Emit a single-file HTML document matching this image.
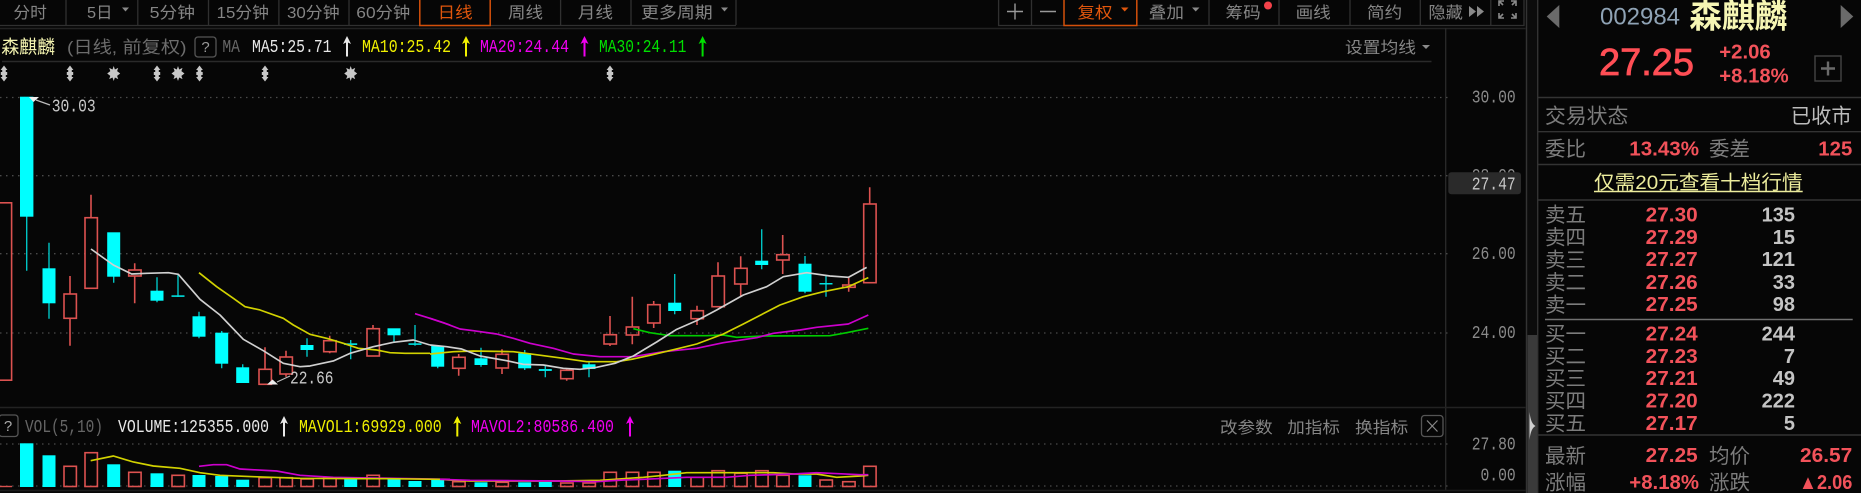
<!DOCTYPE html>
<html><head><meta charset="utf-8"><style>
html,body{margin:0;padding:0;background:#060606;width:1861px;height:493px;overflow:hidden}
svg{display:block;filter:blur(.35px)}
text{font-family:"Liberation Sans","Noto Sans CJK SC",sans-serif}
.m{font-family:"Liberation Mono","Noto Sans CJK SC",monospace;font-size:18.5px}
.t{font-size:16px;fill:#858585}
.l{font-size:20.5px;fill:#7c7c7c}
.p{font-size:20px;font-weight:bold;fill:#f2525a}
.q{font-size:20px;font-weight:bold;fill:#c4c4c4;text-anchor:end}
.a{fill:#8a8a8a}
.d{stroke:#4a4a4a;stroke-width:1.3;stroke-dasharray:1.5 4.5;fill:none}
.s{stroke:#303030;stroke-width:1.3;fill:none}
.o{font-size:16px;fill:#e0560c}
</style></head><body>
<svg width="1861" height="493" viewBox="0 0 1861 493" xmlns="http://www.w3.org/2000/svg">
<defs>
<path id="ar" d="M0-10.5L-4-2.5-1-4V10H1V-4L4-2.5Z"/>
<path id="ud" d="M0-8L3.4-3.5H1.8V-1.5H3.2V1.5H1.8V3.5H3.4L0 8-3.4 3.5H-1.8V1.5H-3.2V-1.5H-1.8V-3.5H-3.4Z"/>
<path id="st" d="M0-7.5L1.2-4 4.5-5.6 3.4-2.4 6.5 0 3.4 2.4 4.5 5.6 1.2 4 0 7.5-1.2 4-4.5 5.6-3.4 2.4-6.5 0-3.4-2.4-4.5-5.6-1.2-4Z"/>
</defs>
<rect width="1861" height="493" fill="#060606"/>

<!-- left toolbar -->
<path class="s" d="M0 25.5H736M66 0V25M137.8 0V25M208.5 0V25M278.9 0V25M349 0V25M560.6 0V25M631 0V25M736 0V25"/>
<rect x="419.8" y="-3" width="70.4" height="28.5" fill="none" stroke="#d4500a" stroke-width="1.5"/>
<text class="t" x="13.4" y="18" textLength="33.5" lengthAdjust="spacingAndGlyphs">分时</text>
<text class="t" x="87" y="18" textLength="25.4" lengthAdjust="spacingAndGlyphs">5日</text>
<polygon class="a" points="122,7.5 129,7.5 125.5,11.5"/>
<text class="t" x="149.7" y="18" textLength="45.3" lengthAdjust="spacingAndGlyphs">5分钟</text>
<text class="t" x="216.7" y="18" textLength="52.3" lengthAdjust="spacingAndGlyphs">15分钟</text>
<text class="t" x="287" y="18" textLength="52.6" lengthAdjust="spacingAndGlyphs">30分钟</text>
<text class="t" x="356.3" y="18" textLength="54" lengthAdjust="spacingAndGlyphs">60分钟</text>
<text class="o" x="437.6" y="18" textLength="35" lengthAdjust="spacingAndGlyphs">日线</text>
<text class="t" x="508" y="18" textLength="35" lengthAdjust="spacingAndGlyphs">周线</text>
<text class="t" x="577.8" y="18" textLength="35.2" lengthAdjust="spacingAndGlyphs">月线</text>
<text class="t" x="641" y="18" textLength="71.7" lengthAdjust="spacingAndGlyphs">更多周期</text>
<polygon class="a" points="721,7.5 728,7.5 724.5,11.5"/>

<!-- right toolbar -->
<path class="s" d="M998.6 0V25.5H1524V0M1031.5 0V25M1209 0V25M1279 0V25M1350 0V25M1420.3 0V25M1490.8 0V25"/>
<rect x="1064" y="-3" width="72.8" height="28.5" fill="none" stroke="#d4500a" stroke-width="1.5"/>
<path d="M1007 11.5H1023M1015 3.5V19.5M1040 11.5H1056" stroke="#999" stroke-width="1.4" fill="none"/>
<text class="o" x="1077.5" y="18" textLength="35" lengthAdjust="spacingAndGlyphs">复权</text>
<polygon fill="#e0560c" points="1121,7.5 1128.5,7.5 1124.7,11.5"/>
<text class="t" x="1148.8" y="18" textLength="35.2" lengthAdjust="spacingAndGlyphs">叠加</text>
<polygon class="a" points="1192,7.5 1199.5,7.5 1195.7,11.5"/>
<text class="t" x="1225.5" y="18" textLength="35.2" lengthAdjust="spacingAndGlyphs">筹码</text>
<circle cx="1268" cy="5.5" r="4" fill="#f4424a"/>
<text class="t" x="1295.6" y="18" textLength="35.2" lengthAdjust="spacingAndGlyphs">画线</text>
<text class="t" x="1367" y="18" textLength="35.2" lengthAdjust="spacingAndGlyphs">简约</text>
<text class="t" x="1428.4" y="18" textLength="34.5" lengthAdjust="spacingAndGlyphs">隐藏</text>
<path class="a" d="M1469 6L1476 11.5 1469 17ZM1477 6L1484 11.5 1477 17Z"/>
<path d="M1499 6V1H1504M1499 1L1503 5M1516 6V1H1511M1516 1L1512 5M1499 13V18H1504M1499 18L1503 14M1516 13V18H1511M1516 18L1512 14" stroke="#8a8a8a" stroke-width="1.6" fill="none"/>

<!-- row lines, axis -->
<path d="M0 28.5H1526" stroke="#222" stroke-width="1.5"/>
<path d="M2 61.5H1431.5" stroke="#2a2a2a" stroke-width="1.4"/>
<path d="M1445.7 28V490" stroke="#2a2a2a" stroke-width="1.3"/>
<path d="M0 407.5H1526" stroke="#222" stroke-width="1.5"/>
<path d="M0 490.5H1526" stroke="#1c1c1c" stroke-width="1.5"/>

<!-- title row -->
<text x="1.4" y="53.5" font-size="18.5" fill="#f4f4b0" textLength="53.6" lengthAdjust="spacingAndGlyphs">森麒麟</text>
<text x="67" y="53" font-size="17" fill="#6c6c6c" textLength="119.5" lengthAdjust="spacingAndGlyphs">(日线, 前复权)</text>
<rect x="195" y="37" width="21" height="20" rx="3" fill="none" stroke="#555" stroke-width="1.3"/>
<text x="205.5" y="52" font-size="15" fill="#999" text-anchor="middle">?</text>
<text class="m" x="222.4" y="52" fill="#666" textLength="17.6" lengthAdjust="spacingAndGlyphs">MA</text>
<text class="m" x="252" y="52" fill="#e8e8e8" textLength="79.5" lengthAdjust="spacingAndGlyphs">MA5:25.71</text>
<use href="#ar" x="347" y="46.5" fill="#e8e8e8"/>
<text class="m" x="362" y="52" fill="#f0f000" textLength="89" lengthAdjust="spacingAndGlyphs">MA10:25.42</text>
<use href="#ar" x="466" y="46.5" fill="#f0f000"/>
<text class="m" x="480" y="52" fill="#f000f0" textLength="89" lengthAdjust="spacingAndGlyphs">MA20:24.44</text>
<use href="#ar" x="584.5" y="46.5" fill="#f000f0"/>
<text class="m" x="599" y="52" fill="#00e000" textLength="87.4" lengthAdjust="spacingAndGlyphs">MA30:24.11</text>
<use href="#ar" x="702.6" y="46.5" fill="#00e000"/>
<text class="t" x="1345" y="53" textLength="71" lengthAdjust="spacingAndGlyphs">设置均线</text>
<polygon class="a" points="1422,45 1430,45 1426,49"/>

<!-- event markers -->
<g fill="#c8c8c8">
<use href="#ud" x="4" y="73.5"/><use href="#ud" x="70" y="73.5"/><use href="#st" x="113.7" y="73.5"/><use href="#ud" x="157" y="73.5"/><use href="#st" x="178" y="73.5"/><use href="#ud" x="199.5" y="73.5"/><use href="#ud" x="265" y="73.5"/><use href="#st" x="350.7" y="73.5"/><use href="#ud" x="610" y="73.5"/>
</g>

<!-- grid -->
<path class="d" d="M0 97.5H1450M0 175.7H1450M0 253.7H1450M0 333H1450M0 444H1450M0 486H1450"/>

<!-- axis labels -->
<g fill="#8a8a8a">
<text class="m" x="1471.7" y="102.5" textLength="44" lengthAdjust="spacingAndGlyphs">30.00</text>
<text class="m" x="1471.7" y="181" textLength="44" lengthAdjust="spacingAndGlyphs">28.00</text>
<text class="m" x="1471.7" y="259" textLength="44" lengthAdjust="spacingAndGlyphs">26.00</text>
<text class="m" x="1471.7" y="338" textLength="44" lengthAdjust="spacingAndGlyphs">24.00</text>
<text class="m" x="1471.7" y="449.5" textLength="44" lengthAdjust="spacingAndGlyphs">27.80</text>
<text class="m" x="1480.5" y="480.5" textLength="35.2" lengthAdjust="spacingAndGlyphs">0.00</text>
</g>
<rect x="1448.3" y="172.3" width="72.7" height="22" rx="3" fill="#2a2a2a"/>
<text class="m" x="1471.7" y="189.5" fill="#c8c8c8" textLength="44" lengthAdjust="spacingAndGlyphs">27.47</text>

<!-- cyan candles -->
<g stroke="#00c4c4" stroke-width="1.4" fill="none">
<path d="M26.7 216V270.7M49 242.7V318.7M113.7 276V282.7M157 277.3V302.3M178 275V297M199 311.7V338.3M221.7 331V368.3M242.7 364.3V368M307 338.3V356.7M350.7 340V359.3M394 335V341.7M415 325V345.7M437.7 366V368.3M481 347.7V366.7M524.7 350V370M545.3 365V377.3M589 361.7V377.3M674.7 274V314.3M761.7 229.3V269.3M805 256V293.3M826 275V296.7"/>
</g>
<g fill="#00ffff">
<rect x="20" y="96.7" width="13.4" height="120"/>
<rect x="42.5" y="268.3" width="13" height="35"/>
<rect x="107.2" y="232.3" width="13" height="44.4"/>
<rect x="150.5" y="290.7" width="13" height="10"/>
<rect x="171.5" y="295.3" width="13" height="1.6" fill="#00e0e0"/>
<rect x="192.5" y="316.3" width="13" height="20.4"/>
<rect x="215.2" y="332.7" width="13" height="31"/>
<rect x="236.2" y="367.3" width="13" height="15.7"/>
<rect x="300.5" y="345" width="13" height="5"/>
<rect x="344.2" y="343.3" width="13" height="1.7" fill="#00e0e0"/>
<rect x="387.5" y="328.3" width="13" height="7"/>
<rect x="408.5" y="343.3" width="13" height="1.6" fill="#00e0e0"/>
<rect x="431.2" y="346" width="13" height="20.7"/>
<rect x="474.5" y="358.3" width="13" height="6.7"/>
<rect x="518.2" y="353.3" width="13" height="15"/>
<rect x="538.8" y="369" width="13" height="2" fill="#00e0e0"/>
<rect x="582.5" y="364.3" width="13" height="4.7"/>
<rect x="668.2" y="302.7" width="13" height="8.3"/>
<rect x="755.2" y="260.7" width="13" height="4.3"/>
<rect x="798.5" y="263.7" width="13" height="28"/>
<rect x="819.5" y="283" width="13" height="1.5" fill="#00e0e0"/>
</g>

<!-- red candles -->
<g stroke="#dc5250" stroke-width="1.6" fill="none">
<path d="M70 276V294M70 318.3V345.7M91 194.7V217.7M134.7 263.3V270M134.7 276V303.3M265 347.3V369.3M286 350.7V357M286 374V376.7M329.7 335.7V340.7M329.7 351.7V353.3M373 325V328.7M458.7 354V357.3M458.7 368.3V375.7M502 349.3V354.3M502 368V374M566.7 368.3V370.3M566.7 378.7V380.7M610 316V334.7M610 344V346M632.3 296.7V327M632.3 335V344.3M653.7 301V304.7M653.7 323V328M697 305.7V310.7M697 318.7V325M718 262.3V276M740.7 256.3V268.3M740.7 284V296M782.7 235V254.7M782.7 260V274M848.7 276.7V285M848.7 287.3V291.7M869.7 187.3V204"/>
<rect x="-1" y="202.8" width="12.6" height="177.4"/>
<rect x="64" y="294" width="12.4" height="24.3"/>
<rect x="85" y="217.7" width="12.4" height="70.6"/>
<rect x="128.7" y="270" width="12.4" height="6"/>
<rect x="259" y="369.3" width="12.4" height="15"/>
<rect x="280" y="357" width="12.4" height="17"/>
<rect x="323.7" y="340.7" width="12.4" height="11"/>
<rect x="367" y="328.7" width="12.4" height="27.3"/>
<rect x="452.7" y="357.3" width="12.4" height="11"/>
<rect x="496" y="354.3" width="12.4" height="13.7"/>
<rect x="560.7" y="370.3" width="12.4" height="8.4"/>
<rect x="604" y="334.7" width="12.4" height="9.3"/>
<rect x="626.3" y="327" width="12.4" height="8"/>
<rect x="647.7" y="304.7" width="12.4" height="18.3"/>
<rect x="691" y="310.7" width="12.4" height="8"/>
<rect x="712" y="276" width="12.4" height="30.7"/>
<rect x="734.7" y="268.3" width="12.4" height="15.7"/>
<rect x="776.7" y="254.7" width="12.4" height="5.3"/>
<rect x="842.7" y="285" width="12.4" height="2.3"/>
<rect x="863.7" y="204" width="12.4" height="78.7"/>
</g>

<!-- price MAs (coords in 3x zoom space) -->
<g fill="none" stroke-width="5" stroke-linejoin="round">
<g transform="translate(0,90) scale(.33333)">
<polyline stroke="#d2d200" points="597,548 650,590 700,625 735,650 780,660 850,685 880,705 930,733 980,745 1030,760 1075,775 1130,780 1170,788 1215,790 1290,790"/>
<polyline stroke="#cc00cc" points="1245,671 1290,685 1350,705"/>
<polyline stroke="#d0d0d0" points="273,477 340,525 395,552 440,550 505,548 535,553 600,628 660,675 730,748 790,782 850,820 900,830 930,828 1000,813 1050,790 1120,770 1180,757 1240,750 1290,765"/>
</g>
<g transform="translate(430,170) scale(.33333)">
<polyline stroke="#00cc00" points="610,476 660,488 720,497 830,497 880,495 920,502 1000,498 1200,497 1250,488 1315,475"/>
<polyline stroke="#cc00cc" points="0,445 40,458 90,477 130,482 200,492 250,505 300,520 370,535 430,552 510,560 610,560 700,545 800,535 880,518 980,503 1030,490 1110,480 1160,472 1255,462 1315,435"/>
<polyline stroke="#d2d200" points="0,552 70,545 130,543 250,545 310,553 400,565 470,575 560,575 610,567 660,556 740,537 800,522 880,492 940,462 1050,405 1120,380 1180,365 1255,350 1315,323"/>
<polyline stroke="#d0d0d0" points="0,525 50,530 95,537 150,558 230,572 280,583 340,585 400,595 450,598 500,592 555,580 610,558 680,516 740,478 800,452 860,420 940,375 1010,350 1060,320 1130,308 1200,318 1255,322 1310,292"/>
</g>
</g>

<!-- hi/lo labels -->
<polygon fill="#eee" points="29,97 39,97 33.5,102"/>
<path d="M36 100L50 105" stroke="#bbb" stroke-width="1.2"/>
<text class="m" x="51.7" y="111.7" fill="#c8c8c8" textLength="44" lengthAdjust="spacingAndGlyphs">30.03</text>
<polygon fill="#eee" points="267,384.5 278,384.5 272.5,379.5"/>
<path d="M277 382L290 376" stroke="#bbb" stroke-width="1.2"/>
<text class="m" x="290" y="383.5" fill="#c8c8c8" textLength="43.5" lengthAdjust="spacingAndGlyphs">22.66</text>

<!-- volume header -->
<rect x="-1" y="415" width="19" height="21.5" rx="3" fill="none" stroke="#555" stroke-width="1.3"/>
<text x="8" y="431" font-size="15" fill="#aaa" text-anchor="middle">?</text>
<text class="m" x="25" y="432" fill="#666" textLength="78" lengthAdjust="spacingAndGlyphs">VOL(5,10)</text>
<text class="m" x="118" y="432" fill="#e8e8e8" textLength="151" lengthAdjust="spacingAndGlyphs">VOLUME:125355.000</text>
<use href="#ar" x="284" y="426.5" fill="#e8e8e8"/>
<text class="m" x="299" y="432" fill="#f0f000" textLength="142.7" lengthAdjust="spacingAndGlyphs">MAVOL1:69929.000</text>
<use href="#ar" x="457.3" y="426.5" fill="#f0f000"/>
<text class="m" x="471" y="432" fill="#f000f0" textLength="143" lengthAdjust="spacingAndGlyphs">MAVOL2:80586.400</text>
<use href="#ar" x="630" y="426.5" fill="#f000f0"/>
<text class="t" x="1220" y="433" textLength="52.7" lengthAdjust="spacingAndGlyphs">改参数</text>
<text class="t" x="1287.3" y="433" textLength="52.7" lengthAdjust="spacingAndGlyphs">加指标</text>
<text class="t" x="1355" y="433" textLength="53.3" lengthAdjust="spacingAndGlyphs">换指标</text>
<rect x="1421.5" y="415.5" width="21.5" height="21" rx="3" fill="none" stroke="#555" stroke-width="1.3"/>
<path d="M1427 420.5L1437.5 431.5M1437.5 420.5L1427 431.5" stroke="#888" stroke-width="1.2"/>

<!-- volume bars -->
<path d="M0 486.5H12" stroke="#d8504e" stroke-width="1.4"/>
<g fill="#00ffff">
<rect x="20" y="443.3" width="13.4" height="43.7"/><rect x="42.5" y="455.3" width="13" height="31.7"/><rect x="107.2" y="464.3" width="13" height="22.7"/><rect x="150.5" y="473.3" width="13" height="13.7"/><rect x="192.5" y="475" width="13" height="12"/><rect x="215.2" y="476" width="13" height="11"/><rect x="236.2" y="479.7" width="13" height="7.3"/><rect x="344.2" y="478.7" width="13" height="8.3"/><rect x="387.5" y="479" width="13" height="8"/><rect x="408.5" y="481" width="13" height="6"/><rect x="431.2" y="479.3" width="13" height="7.7"/><rect x="474.5" y="482.3" width="13" height="4.7"/><rect x="518.2" y="482.3" width="13" height="4.7"/><rect x="538.8" y="482" width="13" height="5"/><rect x="668.2" y="470.7" width="13" height="16.3"/><rect x="798.5" y="475.3" width="13" height="11.7"/>
</g>
<g stroke="#dc5250" stroke-width="1.6" fill="none">
<rect x="64" y="466.3" width="12.4" height="20.2"/><rect x="85" y="452.7" width="12.4" height="33.8"/><rect x="128.7" y="472.3" width="12.4" height="14.2"/><rect x="172" y="475.3" width="12.4" height="11.2"/><rect x="259" y="477.7" width="12.4" height="8.8"/><rect x="280" y="477.7" width="12.4" height="8.8"/><rect x="301" y="479" width="12.4" height="7.5"/><rect x="323.7" y="478.3" width="12.4" height="8.2"/><rect x="367" y="475.3" width="12.4" height="11.2"/><rect x="452.7" y="481.7" width="12.4" height="4.8"/><rect x="496" y="482.3" width="12.4" height="4.2"/><rect x="560.7" y="483" width="12.4" height="3.5"/><rect x="583" y="483" width="12.4" height="3.5"/><rect x="604" y="472.3" width="12.4" height="14.2"/><rect x="626.3" y="472.3" width="12.4" height="14.2"/><rect x="647.7" y="472.3" width="12.4" height="14.2"/><rect x="691" y="477.3" width="12.4" height="9.2"/><rect x="712" y="470.7" width="12.4" height="15.8"/><rect x="734.7" y="473.3" width="12.4" height="13.2"/><rect x="755.7" y="470.7" width="12.4" height="15.8"/><rect x="776.7" y="475.3" width="12.4" height="11.2"/><rect x="820" y="480" width="12.4" height="6.5"/><rect x="842.7" y="481.7" width="12.4" height="4.8"/><rect x="863.7" y="466.3" width="12.4" height="20.2"/>
</g>
<g fill="none" stroke-width="5">
<g transform="translate(0,400) scale(.33333)">
<polyline stroke="#cc00cc" points="597,199 640,194 680,194 720,207 830,213 900,226 1000,232 1350,238"/>
<polyline stroke="#d2d200" points="272,182 340,168 400,186 460,198 540,205 600,218 660,226 760,230 900,235 1080,236 1160,236 1320,238"/>
</g>
<g transform="translate(440,400) scale(.33333)">
<polyline stroke="#d2d200" points="0,238 30,240 90,243 350,243 480,241 550,236 610,232 660,227 740,218 1000,218 1060,222 1130,222 1190,232 1260,228 1285,226"/>
<polyline stroke="#cc00cc" points="0,238 90,241 350,243 470,245 550,240 610,238 740,232 860,232 930,226 1060,222 1130,218 1260,224 1285,224"/>
</g>
</g>

<!-- scrollbar -->
<rect x="1525.5" y="0" width="12" height="493" fill="#0c0c0c"/>
<path d="M1526.5 0V493M1537.7 0V493" stroke="#333" stroke-width="1.4"/>
<rect x="1527.5" y="335" width="9.5" height="158" fill="#3a3a3a"/>
<path d="M1529.5 412C1530.5 420 1532 424 1535.5 426 1532 428 1530.5 432 1529.5 440Z" fill="#d0d0d0"/>

<!-- right panel -->
<polygon fill="#6a6a6a" points="1559.3,5 1559.3,28 1546.7,16.5"/>
<polygon fill="#6a6a6a" points="1840.7,5 1840.7,28 1853.3,16.5"/>
<text x="1600" y="24.3" font-size="24" fill="#8fa3b5" textLength="80" lengthAdjust="spacingAndGlyphs">002984</text>
<text x="1689.3" y="27.5" font-size="33" font-weight="bold" fill="#f6f6b4" textLength="98" lengthAdjust="spacingAndGlyphs">森麒麟</text>
<text x="1599" y="75" font-size="38" fill="#ff4e55" stroke="#ff4e55" stroke-width=".8" textLength="95" lengthAdjust="spacingAndGlyphs">27.25</text>
<text class="p" x="1719.3" y="58.3" textLength="51.4" lengthAdjust="spacingAndGlyphs">+2.06</text>
<text class="p" x="1719.3" y="82.7" textLength="69.4" lengthAdjust="spacingAndGlyphs">+8.18%</text>
<rect x="1815" y="56" width="26" height="25" fill="none" stroke="#444" stroke-width="1.4"/>
<path d="M1821 68.5H1835M1828 61.5V75.5" stroke="#6a6a6a" stroke-width="2.4"/>
<path d="M1538 97.5H1861M1538 131.7H1861M1538 164.5H1861M1538 200H1861M1538 435H1861" stroke="#333" stroke-width="1.4"/>
<text class="l" x="1545" y="122.8" textLength="83.3" lengthAdjust="spacingAndGlyphs">交易状态</text>
<text class="l" x="1790.7" y="122.8" style="fill:#bcbcbc" textLength="61" lengthAdjust="spacingAndGlyphs">已收市</text>
<text class="l" x="1545" y="156" textLength="41" lengthAdjust="spacingAndGlyphs">委比</text>
<text class="p" x="1629.3" y="155.5" textLength="69.7" lengthAdjust="spacingAndGlyphs">13.43%</text>
<text class="l" x="1709" y="156" textLength="41" lengthAdjust="spacingAndGlyphs">委差</text>
<text class="p" x="1818.3" y="155.5" textLength="34" lengthAdjust="spacingAndGlyphs">125</text>
<text x="1594" y="189" font-size="19.5" fill="#ecec9c" textLength="208.7" lengthAdjust="spacingAndGlyphs">仅需20元查看十档行情</text>
<path d="M1594 191.5H1802.7" stroke="#ecec9c" stroke-width="1.6"/>

<g>
<text class="l" x="1545" y="222" textLength="41" lengthAdjust="spacingAndGlyphs">卖五</text>
<text class="l" x="1545" y="244.5" textLength="41" lengthAdjust="spacingAndGlyphs">卖四</text>
<text class="l" x="1545" y="266.8" textLength="41" lengthAdjust="spacingAndGlyphs">卖三</text>
<text class="l" x="1545" y="289.5" textLength="41" lengthAdjust="spacingAndGlyphs">卖二</text>
<text class="l" x="1545" y="311.8" textLength="41" lengthAdjust="spacingAndGlyphs">卖一</text>
<text class="l" x="1545" y="341" textLength="41" lengthAdjust="spacingAndGlyphs">买一</text>
<text class="l" x="1545" y="363.5" textLength="41" lengthAdjust="spacingAndGlyphs">买二</text>
<text class="l" x="1545" y="385.5" textLength="41" lengthAdjust="spacingAndGlyphs">买三</text>
<text class="l" x="1545" y="408" textLength="41" lengthAdjust="spacingAndGlyphs">买四</text>
<text class="l" x="1545" y="430.5" textLength="41" lengthAdjust="spacingAndGlyphs">买五</text>
</g>
<g>
<text class="p" x="1645.7" y="221.5" textLength="52" lengthAdjust="spacingAndGlyphs">27.30</text>
<text class="p" x="1645.7" y="243.8" textLength="52" lengthAdjust="spacingAndGlyphs">27.29</text>
<text class="p" x="1645.7" y="266" textLength="52" lengthAdjust="spacingAndGlyphs">27.27</text>
<text class="p" x="1645.7" y="288.8" textLength="52" lengthAdjust="spacingAndGlyphs">27.26</text>
<text class="p" x="1645.7" y="311" textLength="52" lengthAdjust="spacingAndGlyphs">27.25</text>
<text class="p" x="1645.7" y="340.5" textLength="52" lengthAdjust="spacingAndGlyphs">27.24</text>
<text class="p" x="1645.7" y="362.8" textLength="52" lengthAdjust="spacingAndGlyphs">27.23</text>
<text class="p" x="1645.7" y="384.8" textLength="52" lengthAdjust="spacingAndGlyphs">27.21</text>
<text class="p" x="1645.7" y="407.3" textLength="52" lengthAdjust="spacingAndGlyphs">27.20</text>
<text class="p" x="1645.7" y="429.8" textLength="52" lengthAdjust="spacingAndGlyphs">27.17</text>
</g>
<g>
<text class="q" x="1795" y="221.5">135</text>
<text class="q" x="1795" y="243.8">15</text>
<text class="q" x="1795" y="266">121</text>
<text class="q" x="1795" y="288.8">33</text>
<text class="q" x="1795" y="311">98</text>
<text class="q" x="1795" y="340.5">244</text>
<text class="q" x="1795" y="362.8">7</text>
<text class="q" x="1795" y="384.8">49</text>
<text class="q" x="1795" y="407.3">222</text>
<text class="q" x="1795" y="429.8">5</text>
</g>
<path d="M1545 319.5H1852.7" stroke="#707070" stroke-width="1.4"/>

<text class="l" x="1545" y="462.8" textLength="41" lengthAdjust="spacingAndGlyphs">最新</text>
<text class="p" x="1645.7" y="462" textLength="52" lengthAdjust="spacingAndGlyphs">27.25</text>
<text class="l" x="1709" y="462.8" textLength="41" lengthAdjust="spacingAndGlyphs">均价</text>
<text class="p" x="1800" y="462" textLength="52.3" lengthAdjust="spacingAndGlyphs">26.57</text>
<text class="l" x="1545" y="489.5" textLength="41" lengthAdjust="spacingAndGlyphs">涨幅</text>
<text class="p" x="1629.3" y="489" textLength="69.7" lengthAdjust="spacingAndGlyphs">+8.18%</text>
<text class="l" x="1709" y="489.5" textLength="41" lengthAdjust="spacingAndGlyphs">涨跌</text>
<text class="p" x="1799" y="489" textLength="53.3" lengthAdjust="spacingAndGlyphs">▲2.06</text>
</svg>
</body></html>
